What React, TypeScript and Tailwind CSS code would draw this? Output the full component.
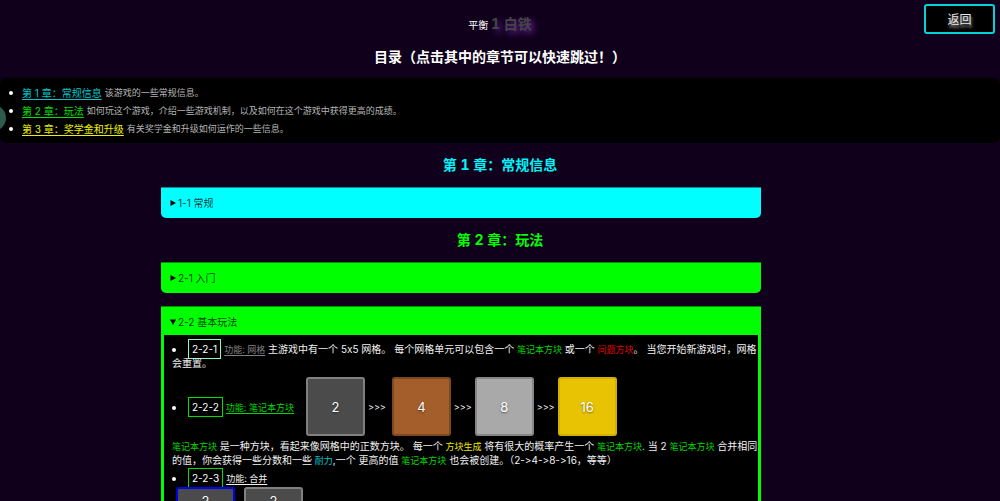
import type { ReactNode } from "react";

function Marker({ open = false }: { open?: boolean }) {
  return (
    <svg viewBox="0 0 6 6" className="mr-[2px] size-[6px] shrink-0" aria-hidden="true">
      <path d={open ? "M0 0.5H6L3 6Z" : "M0.5 0L6 3L0.5 6Z"} fill="#000" />
    </svg>
  );
}

function Section({
  title,
  className,
  open = false,
  children,
}: {
  title: string;
  className: string;
  open?: boolean;
  children?: ReactNode;
}) {
  return (
    <details open={open} className={`ml-[16.1%] w-[60%] border-t ${className}`}>
      <summary className="flex cursor-pointer list-none items-center pt-[2px] pl-[9px] text-[10px] leading-[26px] text-black/80">
        <Marker open={open} />
        {title}
      </summary>
      {children}
    </details>
  );
}

function ChapterTitle({ id, className, children }: { id: string; className: string; children: ReactNode }) {
  return (
    <h2 id={id} className={`my-[10px] text-center text-[14px] leading-6 font-bold tabular-nums ${className}`}>
      {children}
    </h2>
  );
}

function Badge({ className, children }: { className: string; children: ReactNode }) {
  return (
    <>
      <span className="mr-[12px] inline-block size-1 rounded-full bg-white align-middle" />
      <span className={`mr-[3px] border bg-black px-[3px] py-[3px] leading-none text-white ${className}`}>
        {children}
      </span>
    </>
  );
}

function Feature({ className = "", children }: { className?: string; children: ReactNode }) {
  return <u className={`text-[9px] leading-none underline-offset-2 ${className}`}>{children}</u>;
}

function Term({ className, children }: { className: string; children: ReactNode }) {
  return <b className={`text-[9px] leading-none font-normal ${className}`}>{children}</b>;
}

const Note = () => <Term className="text-[#00d800]">笔记本方块</Term>;

function Tile({ className, children }: { className: string; children: ReactNode }) {
  return (
    <div
      className={`flex size-[59px] shrink-0 justify-center rounded-[3px] border-2 text-[13px] leading-[14px] text-white [text-shadow:0_1px_2px_rgba(0,0,0,.5)] ${className}`}
    >
      {children}
    </div>
  );
}

const toc = [
  { href: "#c1", title: "第 1 章：常规信息", text: "该游戏的一些常规信息。", color: "text-[#00c8cc]" },
  {
    href: "#c2",
    title: "第 2 章：玩法",
    text: "如何玩这个游戏，介绍一些游戏机制，以及如何在这个游戏中获得更高的成绩。",
    color: "text-[#00e000]",
  },
  { href: "#c3", title: "第 3 章：奖学金和升级", text: "有关奖学金和升级如何运作的一些信息。", color: "text-[#eef000]" },
];

export default function App() {
  return (
    <div className="relative h-screen overflow-x-hidden overflow-y-auto bg-[#10001b] font-['Inter','Noto_Sans_CJK_SC',sans-serif] text-white [font-variant-ligatures:none] [scrollbar-width:none]">
      <button
        type="button"
        className="absolute top-1 right-[5px] h-[30px] w-[71px] rounded-[3px] border-2 border-[#00d3da] bg-black pt-[2px] text-[12px] text-[#e8e8e8] [text-shadow:1px_3px_3px_#aaa]"
      >
        返回
      </button>
      <header className="pt-3 text-center">
        <p className="text-[10px] leading-6">
          平衡{" "}
          <b className="text-[14px] text-[#444644] tabular-nums [text-shadow:3px_3px_6px_#6a22a0]">1 白铁</b>
        </p>
        <h1 className="mt-2 mb-[9px] text-[14px] leading-6 font-bold">目录（点击其中的章节可以快速跳过！）</h1>
      </header>
      <nav className="relative rounded-md bg-black pt-1.5 pb-[5px]">
        <ul>
          {toc.map((item) => (
            <li key={item.href} className="flex items-center pl-[9px] text-[9px] leading-[18px] text-[#b4b4b4]">
              <span className="mr-[9px] size-1 rounded-full bg-white" />
              <a href={item.href} className={`mr-[3px] text-[10px] underline underline-offset-2 ${item.color}`}>
                {item.title}
              </a>
              {item.text}
            </li>
          ))}
        </ul>
        <span className="absolute top-[27px] -left-5 size-[26px] rounded-full bg-[#2d5a4d]" />
      </nav>
      <main>
        <ChapterTitle id="c1" className="text-[#00f4f8]">第 1 章：常规信息</ChapterTitle>
        <Section title="1-1 常规" className="rounded-b-[5px] border-[#008f91] bg-[#00ffff] pb-0.5" />
        <ChapterTitle id="c2" className="text-[#00ff00]">第 2 章：玩法</ChapterTitle>
        <Section title="2-1 入门" className="rounded-b-[5px] border-[#009100] bg-[#00ff00] pb-0.5" />
        <Section title="2-2 基本玩法" open className="mt-[13px] border-[#009100] bg-[#00ff00] pb-[3px]">
          <div className="mx-[3px] bg-black pt-[7px] pb-4 pl-2 text-[10px] leading-[14px] text-[#f0f0f0]">
            <p>
              <Badge className="border-[#7fffd4]">2-2-1</Badge>
              <Feature className="text-[#808080]">功能: 网格</Feature> 主游戏中有一个 5x5 网格。
              每个网格单元可以包含一个 <Note /> 或一个 <Term className="text-[#e00000]">问题方块</Term>。
              当您开始新游戏时，网格
              <br />
              会重置。
            </p>
            <div className="mt-[7px] flex items-center">
              <p className="mr-3 shrink-0">
                <Badge className="border-[#00e000]">2-2-2</Badge>
                <Feature className="text-[#00d800]">功能: 笔记本方块</Feature>
              </p>
              <Tile className="items-center border-[#808080] bg-[#4b4b4b]">2</Tile>
              <span className="mr-1.5 ml-[3px] text-[9px]">&gt;&gt;&gt;</span>
              <Tile className="items-center border-[#7d4820] bg-[#a35e2b]">4</Tile>
              <span className="mx-[3px] text-[9px]">&gt;&gt;&gt;</span>
              <Tile className="items-center border-[#868686] bg-[#a9a9a9]">8</Tile>
              <span className="mx-[3px] text-[9px]">&gt;&gt;&gt;</span>
              <Tile className="items-center border-[#d0b000] bg-[#e7c304]">16</Tile>
            </div>
            <p className="mt-[3px]">
              <Note /> 是一种方块，看起来像网格中的正数方块。 每一个{" "}
              <Term className="text-[#f0e800]">方块生成</Term> 将有很大的概率产生一个 <Note />. 当 2 <Note /> 合并相同
              <br />
              的值，你会获得一些分数和一些 <Term className="text-[#00c8d0]">耐力</Term>,一个 更高的值 <Note />{" "}
              也会被创建。（2-&gt;4-&gt;8-&gt;16，等等）
            </p>
            <p className="mt-1">
              <Badge className="border-[#00e000]">2-2-3</Badge>
              <Feature>功能: 合并</Feature>
            </p>
            <div className="mt-[2px] ml-1 flex gap-[9px]">
              <Tile className="items-start border-[#0000e8] bg-[#4b4b4b] pt-[5px]">2</Tile>
              <Tile className="items-start border-[#808080] bg-[#4b4b4b] pt-[5px]">2</Tile>
            </div>
          </div>
        </Section>
      </main>
    </div>
  );
}
